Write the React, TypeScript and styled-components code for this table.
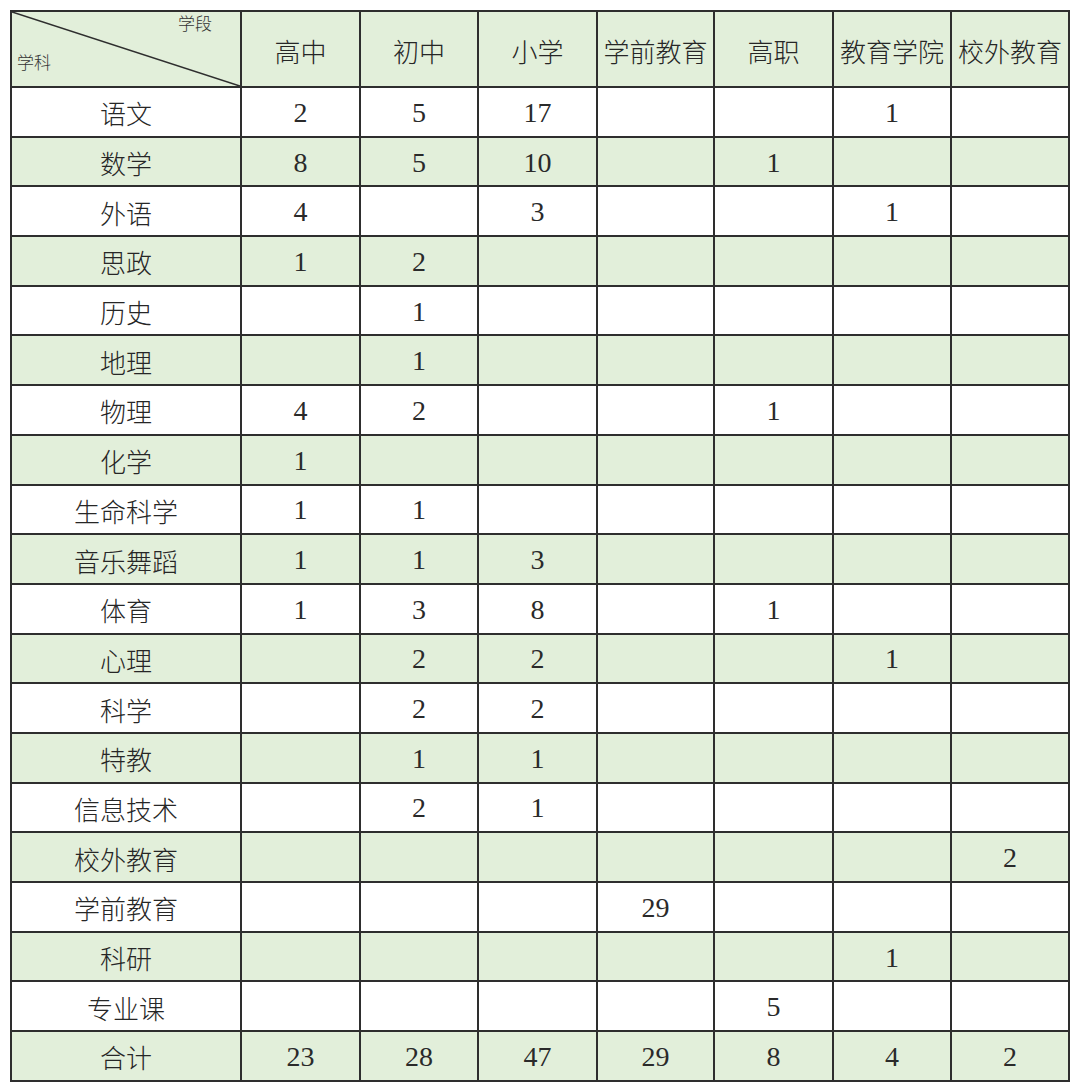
import React from "react";
import styled, { createGlobalStyle } from "styled-components";

const Global = createGlobalStyle`
  html, body { margin: 0; padding: 0; background: #ffffff; }
  body { font-family: "Liberation Serif", "Noto Sans CJK SC", serif; color: #222; }
`;

const Page = styled.div`
  padding: 10px;
`;

const Grid = styled.div`
  display: grid;
  grid-template-columns: 230px 119px 118px 119px 117px 119px 118px 118px;
  grid-template-rows: 76px repeat(20, 49.7px);
  width: max-content;
  border-top: 2px solid #2e2e2e;
  border-left: 2px solid #2e2e2e;
`;

const Cell = styled.div<{ $shade: boolean }>`
  box-sizing: border-box;
  border-right: 2px solid #2e2e2e;
  border-bottom: 2px solid #2e2e2e;
  background: ${(p) => (p.$shade ? "#e2efda" : "#ffffff")};
  display: flex;
  align-items: center;
  justify-content: center;
  padding-top: 2px;
  font-family: "Liberation Serif", "Noto Sans CJK SC", serif;
  font-size: 26px;
  font-weight: 300;
  color: #262626;
  white-space: nowrap;
  overflow: hidden;
`;

const Num = styled.span`
  font-family: "Liberation Serif", serif;
  font-size: 28px;
  font-weight: 400;
  line-height: 1;
  color: #2a2a2a;
`;

const Corner = styled(Cell)`
  position: relative;
  display: block;
  padding-top: 0;
`;

const Slash = styled.svg`
  position: absolute;
  inset: 0;
  width: 100%;
  height: 100%;
`;

const CornerLabel = styled.span<{ $pos: "top" | "bottom" }>`
  position: absolute;
  font-size: 17px;
  line-height: 1;
  color: #333;
  ${(p) =>
    p.$pos === "top"
      ? "top: 4px; right: 28px;"
      : "bottom: 14px; left: 5px;"}
`;

const stages = ["高中", "初中", "小学", "学前教育", "高职", "教育学院", "校外教育"];

const rows: [string, (number | null)[]][] = [
  ["语文", [2, 5, 17, null, null, 1, null]],
  ["数学", [8, 5, 10, null, 1, null, null]],
  ["外语", [4, null, 3, null, null, 1, null]],
  ["思政", [1, 2, null, null, null, null, null]],
  ["历史", [null, 1, null, null, null, null, null]],
  ["地理", [null, 1, null, null, null, null, null]],
  ["物理", [4, 2, null, null, 1, null, null]],
  ["化学", [1, null, null, null, null, null, null]],
  ["生命科学", [1, 1, null, null, null, null, null]],
  ["音乐舞蹈", [1, 1, 3, null, null, null, null]],
  ["体育", [1, 3, 8, null, 1, null, null]],
  ["心理", [null, 2, 2, null, null, 1, null]],
  ["科学", [null, 2, 2, null, null, null, null]],
  ["特教", [null, 1, 1, null, null, null, null]],
  ["信息技术", [null, 2, 1, null, null, null, null]],
  ["校外教育", [null, null, null, null, null, null, 2]],
  ["学前教育", [null, null, null, 29, null, null, null]],
  ["科研", [null, null, null, null, null, 1, null]],
  ["专业课", [null, null, null, null, 5, null, null]],
  ["合计", [23, 28, 47, 29, 8, 4, 2]],
];

export default function App() {
  return (
    <Page>
      <Global />
      <Grid>
        <Corner $shade>
          <Slash viewBox="0 0 228 74" preserveAspectRatio="none">
            <line x1="0" y1="0" x2="228" y2="74" stroke="#2e2e2e" strokeWidth="1.6" />
          </Slash>
          <CornerLabel $pos="top">学段</CornerLabel>
          <CornerLabel $pos="bottom">学科</CornerLabel>
        </Corner>
        {stages.map((s) => (
          <Cell key={s} $shade>
            {s}
          </Cell>
        ))}
        {rows.map(([subject, vals], i) => {
          const shade = i % 2 === 1;
          return (
            <React.Fragment key={subject + i}>
              <Cell $shade={shade}>{subject}</Cell>
              {vals.map((v, j) => (
                <Cell key={j} $shade={shade}>
                  {v !== null && <Num>{v}</Num>}
                </Cell>
              ))}
            </React.Fragment>
          );
        })}
      </Grid>
    </Page>
  );
}
